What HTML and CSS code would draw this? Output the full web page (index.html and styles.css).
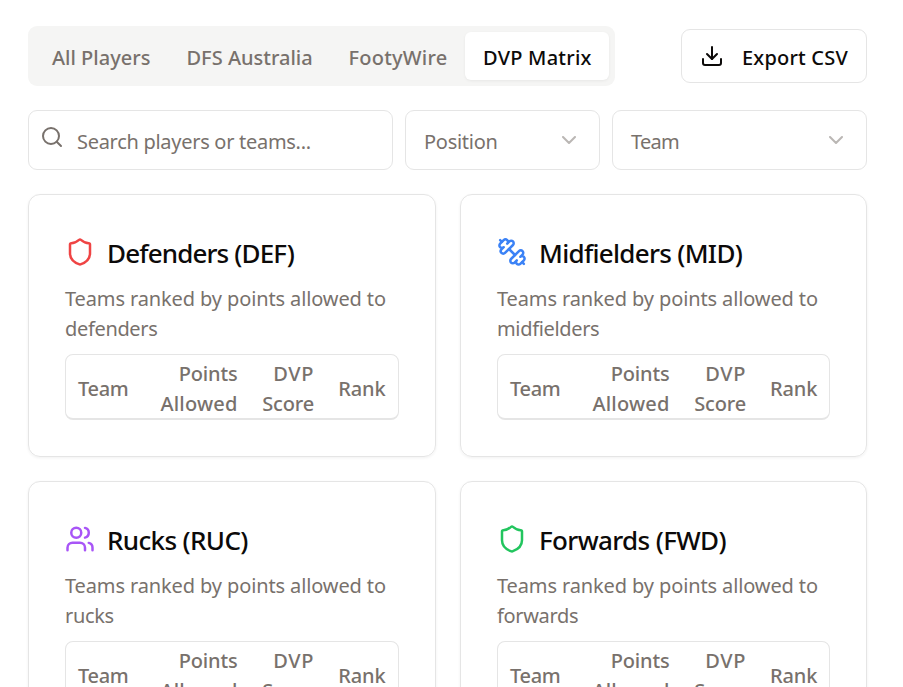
FILE: index.html
```html
<!DOCTYPE html>
<html lang="en">
<head>
<meta charset="utf-8">
<title>DVP Matrix</title>
<link rel="stylesheet" href="styles.css">
</head>
<body>
<main class="page">
  <header class="toolbar">
    <nav class="tabs">
      <button class="tab tab-all">All Players</button>
      <button class="tab tab-dfs">DFS Australia</button>
      <button class="tab tab-footy">FootyWire</button>
      <button class="tab tab-dvp active">DVP Matrix</button>
    </nav>
    <button class="export">
      <svg class="icon" viewBox="0 0 24 24"><path d="M21 15v4a2 2 0 0 1-2 2H5a2 2 0 0 1-2-2v-4"/><path d="m7 10 5 5 5-5"/><path d="M12 15V3"/></svg>
      <span>Export CSV</span>
    </button>
  </header>

  <section class="filters">
    <div class="field search">
      <svg class="icon" viewBox="0 0 24 24"><circle cx="11" cy="11" r="8"/><path d="m21 21-4.3-4.3"/></svg>
      <span class="search-text">Search players or teams...</span>
    </div>
    <div class="field select position">
      <span class="position-text">Position</span>
      <svg class="icon chevron" viewBox="0 0 24 24"><path d="m6 9 6 6 6-6"/></svg>
    </div>
    <div class="field select team">
      <span class="team-text">Team</span>
      <svg class="icon chevron" viewBox="0 0 24 24"><path d="m6 9 6 6 6-6"/></svg>
    </div>
  </section>

  <section class="cards">
    <article class="card">
      <h3 class="title title-def">
        <svg class="icon red" viewBox="0 0 24 24"><path d="M20 13c0 5-3.5 7.5-7.66 8.95a1 1 0 0 1-.67-.01C7.5 20.5 4 18 4 13V6a1 1 0 0 1 1-1c2 0 4.5-1.2 6.24-2.72a1.17 1.17 0 0 1 1.52 0C14.51 3.81 17 5 19 5a1 1 0 0 1 1 1z"/></svg>
        <span>Defenders (DEF)</span>
      </h3>
      <p class="desc">Teams ranked by points allowed to <span class="role">defenders</span></p>
      <div class="table">
        <div class="th">Team</div><div class="th num">Points <span class="allowed">Allowed</span></div><div class="th num"><span class="dvp">DVP</span> Score</div><div class="th num">Rank</div>
      </div>
    </article>
    <article class="card">
      <h3 class="title title-mid">
        <svg class="icon blue" viewBox="0 0 24 24"><path d="M14.4 14.4 9.6 9.6"/><path d="M18.657 21.485a2 2 0 1 1-2.829-2.828l-1.767 1.768a2 2 0 1 1-2.829-2.829l6.364-6.364a2 2 0 1 1 2.829 2.829l-1.768 1.767a2 2 0 1 1 2.828 2.829z"/><path d="m21.5 21.5-1.4-1.4"/><path d="M3.9 3.9 2.5 2.5"/><path d="M6.404 12.768a2 2 0 1 1-2.829-2.829l1.768-1.767a2 2 0 1 1-2.828-2.829l2.828-2.828a2 2 0 1 1 2.829 2.828l1.767-1.768a2 2 0 1 1 2.829 2.829z"/></svg>
        <span>Midfielders (MID)</span>
      </h3>
      <p class="desc">Teams ranked by points allowed to <span class="role">midfielders</span></p>
      <div class="table">
        <div class="th">Team</div><div class="th num">Points <span class="allowed">Allowed</span></div><div class="th num"><span class="dvp">DVP</span> Score</div><div class="th num">Rank</div>
      </div>
    </article>
    <article class="card">
      <h3 class="title title-ruc">
        <svg class="icon purple" viewBox="0 0 24 24"><path d="M16 21v-2a4 4 0 0 0-4-4H6a4 4 0 0 0-4 4v2"/><circle cx="9" cy="7" r="4"/><path d="M22 21v-2a4 4 0 0 0-3-3.87"/><path d="M16 3.13a4 4 0 0 1 0 7.75"/></svg>
        <span>Rucks (RUC)</span>
      </h3>
      <p class="desc">Teams ranked by points allowed to <span class="role">rucks</span></p>
      <div class="table">
        <div class="th">Team</div><div class="th num">Points <span class="allowed">Allowed</span></div><div class="th num"><span class="dvp">DVP</span> Score</div><div class="th num">Rank</div>
      </div>
    </article>
    <article class="card">
      <h3 class="title title-fwd">
        <svg class="icon green" viewBox="0 0 24 24"><path d="M20 13c0 5-3.5 7.5-7.66 8.95a1 1 0 0 1-.67-.01C7.5 20.5 4 18 4 13V6a1 1 0 0 1 1-1c2 0 4.5-1.2 6.24-2.72a1.17 1.17 0 0 1 1.52 0C14.51 3.81 17 5 19 5a1 1 0 0 1 1 1z"/></svg>
        <span>Forwards (FWD)</span>
      </h3>
      <p class="desc">Teams ranked by points allowed to <span class="role">forwards</span></p>
      <div class="table">
        <div class="th">Team</div><div class="th num">Points <span class="allowed">Allowed</span></div><div class="th num"><span class="dvp">DVP</span> Score</div><div class="th num">Rank</div>
      </div>
    </article>
  </section>
</main>
</body>
</html>
```
FILE: styles.css
```css
* { box-sizing: border-box; margin: 0; padding: 0; }
html, body { height: 687px; overflow: hidden; background: #fff; }
body { font: 400 20px/30px "Noto Sans", sans-serif; color: #0c0a09; }
button { font: inherit; color: inherit; border: 0; background: none; }
.icon { width: 24px; height: 24px; flex: none; display: block; fill: none; stroke: currentColor; stroke-width: 2; stroke-linecap: round; stroke-linejoin: round; }

.page { padding: 26px 36px 0 28px; }
.toolbar { display: flex; justify-content: space-between; align-items: center; height: 60px; }
.tabs { display: grid; grid-template-columns: 134.5px 162px 134.5px 144px; width: 587px; height: 60px; padding: 6px; border-radius: 9px; background: #f5f5f4; color: #78716c; }
.tab { display: flex; align-items: center; padding: 3px 0 0 18px; font-weight: 500; border-radius: 6px; white-space: nowrap; }
.tab-footy { letter-spacing: .22px; }
.tab-dvp { letter-spacing: .24px; }
.tab.active { background: #fff; color: #0c0a09; box-shadow: 0 1px 3px rgba(0,0,0,.06); }
.export { display: flex; align-items: center; gap: 18px; width: 186px; height: 54px; padding: 0 18px; border: 1px solid #e5e5e5; border-radius: 9px; font-weight: 500; letter-spacing: .2px; white-space: nowrap; }
.export span { padding-top: 3px; }

.filters { display: grid; grid-template-columns: 365px 195px 255px; gap: 12px; margin-top: 24px; }
.field { display: flex; align-items: center; height: 60px; border: 1px solid #e5e5e5; border-radius: 9px; color: #78716c; white-space: nowrap; }
.field span { padding-top: 3px; }
.search { gap: 13px; padding-left: 11px; }
.search .icon { margin-bottom: 6px; }
.search-text { letter-spacing: -.29px; }
.select { justify-content: space-between; padding: 0 18px; }
.position-text { letter-spacing: -.28px; }
.team-text { letter-spacing: -.7px; }
.chevron { opacity: .5; }

.cards { display: grid; grid-template-columns: 408px 407px; gap: 24px; margin-top: 24px; }
.card { height: 263px; padding: 36px; border: 1px solid #e5e5e5; border-radius: 12px; box-shadow: 0 1px 3px rgba(0,0,0,.06); }
.title { display: flex; align-items: center; gap: 12px; height: 42px; font-size: 26px; line-height: 42px; font-weight: 500; white-space: nowrap; }
.title .icon { width: 30px; height: 30px; }
.title span { padding-top: 2px; }
.title-def { letter-spacing: -.86px; }
.title-mid { letter-spacing: -.7px; }
.title-ruc { letter-spacing: -.64px; }
.title-fwd { letter-spacing: -.64px; }
.red { stroke: #ef4444; }
.blue { stroke: #3b82f6; }
.purple { stroke: #a855f7; }
.green { stroke: #22c55e; }
.desc { margin-top: 11px; color: #78716c; letter-spacing: -.12px; }
.role { letter-spacing: -.34px; }
.table { display: grid; grid-template-columns: 82.5px 101px 76.5px 1fr; grid-template-rows: 60px; align-items: center; height: 66px; margin-top: 10px; padding-top: 4px; border: 1px solid #e5e5e5; border-bottom-width: 2px; border-radius: 8px; color: #78716c; }
.th { padding: 0 12px; font-weight: 500; letter-spacing: -.3px; }
.num { text-align: right; letter-spacing: -.15px; }
.num:last-child { padding-right: 12.5px; }
.allowed { letter-spacing: .18px; }
.dvp { letter-spacing: .6px; }
```
